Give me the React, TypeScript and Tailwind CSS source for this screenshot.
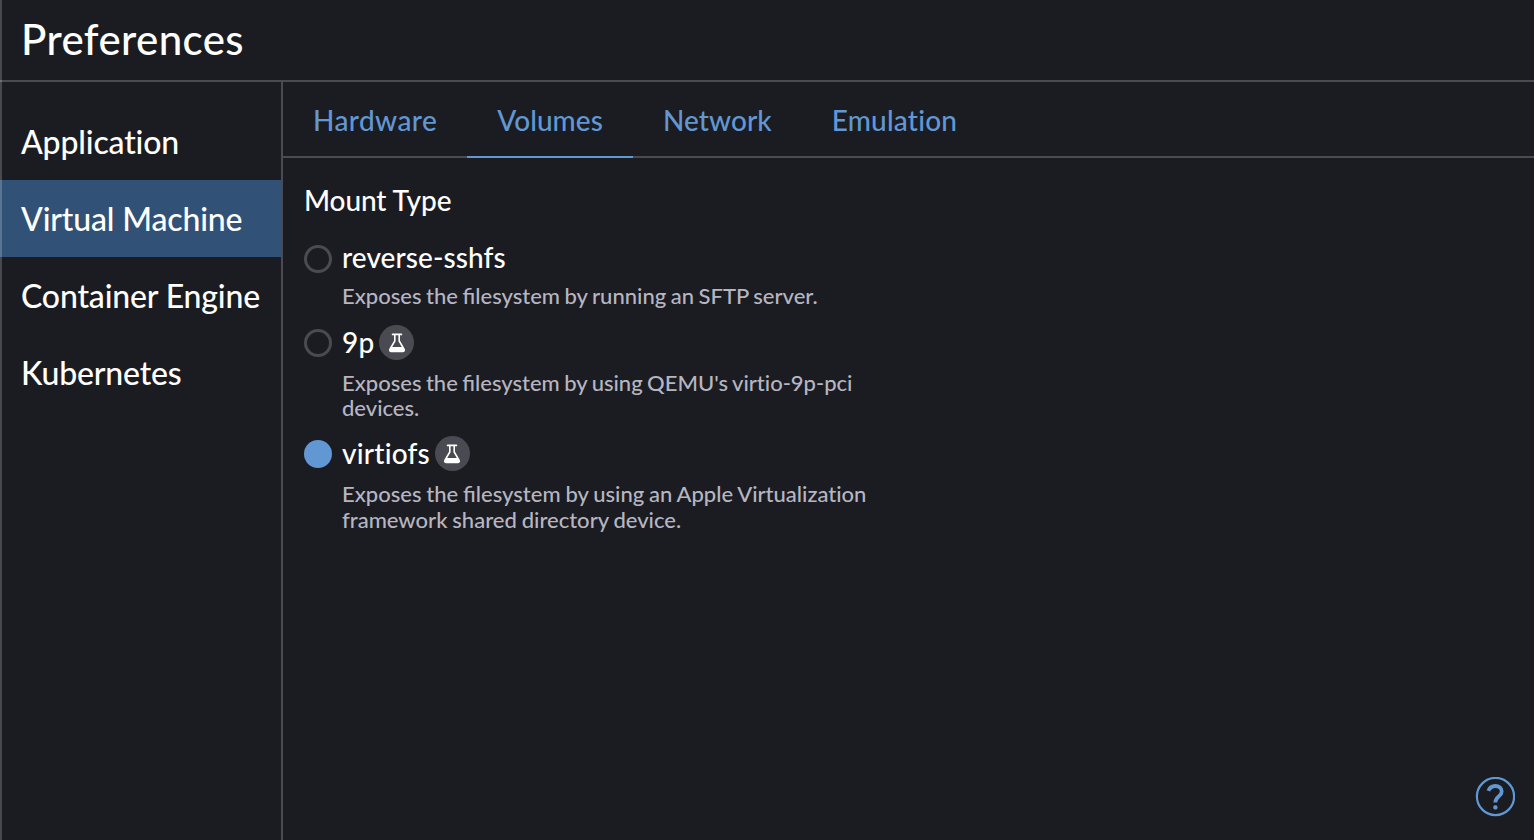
type MountType = {
  name: string;
  description: string[];
  experimental?: boolean;
  selected?: boolean;
  nameStyle: string;
  textStyle: string;
};

const navItems = ['Application', 'Virtual Machine', 'Container Engine', 'Kubernetes'];

const tabs = [
  { label: 'Hardware', tracking: 'tracking-[0.4px]' },
  { label: 'Volumes', tracking: 'tracking-[0.05px]' },
  { label: 'Network', tracking: 'tracking-[0.07px]' },
  { label: 'Emulation', tracking: 'tracking-[0.2px]' },
];

const mountTypes: MountType[] = [
  {
    name: 'reverse-sshfs',
    description: ['Exposes the filesystem by running an SFTP server.'],
    nameStyle: '-mt-[5px] tracking-[0.08px]',
    textStyle: 'mt-[10px] mb-[2px] leading-[25px] [word-spacing:-1px]',
  },
  {
    name: '9p',
    description: ["Exposes the filesystem by using QEMU's virtio-9p-pci", 'devices.'],
    experimental: true,
    nameStyle: '-mt-[3px] tracking-[0.15px]',
    textStyle: 'mt-[9px] mb-px leading-[25px] [word-spacing:-1.1px]',
  },
  {
    name: 'virtiofs',
    description: ['Exposes the filesystem by using an Apple Virtualization', 'framework shared directory device.'],
    experimental: true,
    selected: true,
    nameStyle: '-mt-[3px] tracking-[0.22px]',
    textStyle: 'mt-[9px] leading-[25.5px] [word-spacing:-0.7px]',
  },
];

function FlaskBadge() {
  return (
    <span className="-mt-px ml-[5px] flex size-[35px] shrink-0 items-center justify-center rounded-full bg-[#4a4b52]">
      <svg width="18" height="20" viewBox="0 0 18 20" fill="none" className="text-white">
        <path d="M4.6 1.4h8.8" stroke="currentColor" strokeWidth="1.7" strokeLinecap="round" />
        <path
          d="M6.8 1.5V8L2 16.2c-.7 1.2 0 2.2 1.3 2.2h11.4c1.3 0 2-1 1.3-2.2L11.2 8V1.5"
          stroke="currentColor"
          strokeWidth="1.6"
          strokeLinejoin="round"
        />
        <path d="M3.3 14h11.4l1.6 2.8-.6 1.6H2.3l-.6-1.6z" fill="currentColor" />
      </svg>
    </span>
  );
}

function MountOption({ option }: { option: MountType }) {
  return (
    <div className="flex flex-col">
      <div className={`flex items-center ${option.experimental ? 'h-9' : 'h-7'}`}>
        <span
          className={`size-7 shrink-0 rounded-full ${
            option.selected ? 'bg-[#6197d3]' : 'border-[3px] border-[#4a4b52]'
          }`}
        />
        <span className={`ml-[10px] text-[28px] leading-[28px] text-white ${option.nameStyle}`}>
          {option.name}
        </span>
        {option.experimental && <FlaskBadge />}
      </div>
      <p className={`ml-[38px] text-[22px] whitespace-nowrap text-[#b6b6c2] ${option.textStyle}`}>
        {option.description.map((line) => (
          <span key={line} className="block">
            {line.split(/(filesystem)/).filter(Boolean).map((part, i) =>
              part === 'filesystem' ? (
                <span key={i} className="[font-variant-ligatures:normal]">
                  {part}
                </span>
              ) : (
                part
              ),
            )}
          </span>
        ))}
      </p>
    </div>
  );
}

export default function App() {
  return (
    <div className="relative flex h-[840px] w-[1534px] flex-col overflow-hidden bg-[#1b1c21] font-['Lato',sans-serif] font-medium text-white antialiased [font-variant-ligatures:none]">
      <header className="flex h-[82px] shrink-0 items-center border-b-2 border-[#4a4b52] pb-[2px] pl-[21px]">
        <h1 className="text-[42px] leading-[50px] tracking-[0.4px]">Preferences</h1>
      </header>
      <div className="flex min-h-0 flex-1">
        <nav className="flex w-[283px] shrink-0 flex-col border-r-2 border-[#4a4b52] pt-[21px]">
          {navItems.map((item) => (
            <a
              key={item}
              className={`flex h-[77px] items-center pl-[21px] text-[32px] tracking-[-0.16px] whitespace-nowrap ${
                item === 'Virtual Machine' ? 'bg-[#315276]' : ''
              }`}
            >
              {item}
            </a>
          ))}
        </nav>
        <main className="flex flex-1 flex-col">
          <div className="flex h-[76px] shrink-0 border-b-2 border-[#4a4b52]">
            {tabs.map((tab) => (
              <a
                key={tab.label}
                className={`-mb-[2px] flex items-center border-b-2 px-[30px] pt-[2px] text-[28px] text-[#6197d3] ${tab.tracking} ${
                  tab.label === 'Volumes' ? 'border-[#6197d3]' : 'border-transparent'
                }`}
              >
                {tab.label}
              </a>
            ))}
          </div>
          <section className="flex flex-col pt-[25px] pl-[21px]">
            <h2 className="text-[28px] leading-[34px] tracking-[-0.1px]">Mount Type</h2>
            <div className="mt-[28px] flex flex-col gap-[15px]">
              {mountTypes.map((option) => (
                <MountOption key={option.name} option={option} />
              ))}
            </div>
          </section>
        </main>
      </div>
      <div className="absolute top-0 left-0 h-full w-[2px] bg-white/20" />
      <button className="absolute right-[19px] bottom-[23px] text-[#6197d3]" aria-label="Help">
        <svg width="40" height="40" viewBox="0 0 40 40" fill="none">
          <circle cx="20.5" cy="19.5" r="18.6" stroke="currentColor" strokeWidth="2.2" />
          <path
            d="M13.4 13.8c1.1-3 3.4-4.8 6.9-4.8 3.8 0 6.4 2.2 6.4 5.4 0 5-6.4 5.2-6.4 11.2"
            stroke="currentColor"
            strokeWidth="3.8"
          />
          <rect x="18.3" y="28.2" width="4.2" height="4.2" rx="1.6" fill="currentColor" />
        </svg>
      </button>
    </div>
  );
}
